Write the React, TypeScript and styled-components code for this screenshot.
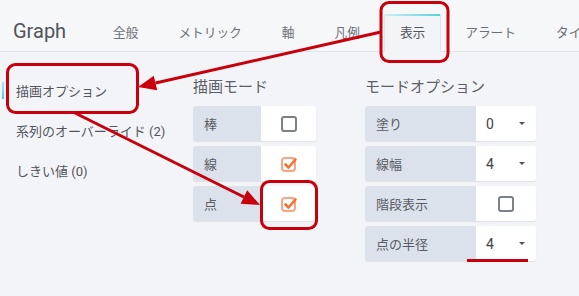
import React from "react";
import styled, { createGlobalStyle } from "styled-components";

const Global = createGlobalStyle`
  html, body { margin: 0; padding: 0; }
  body {
    background: #f3f4f7;
    font-family: Roboto, "Noto Sans CJK JP", sans-serif;
    overflow: hidden;
  }
`;

const Page = styled.div`
  position: relative;
  width: 579px;
  height: 296px;
  overflow: hidden;
  background: #f3f4f7;
`;

const Header = styled.div`
  display: flex;
  align-items: flex-end;
  height: 51px;
  padding-left: 13px;
  background: #f6f7f9;
  border-bottom: 1px solid #e2e4e9;
`;

const Title = styled.div`
  width: 84px;
  height: 38px;
  padding-bottom: 2px;
  box-sizing: border-box;
  display: flex;
  align-items: center;
  font-family: Roboto, sans-serif;
  font-size: 20px;
  color: #50535b;
  flex-shrink: 0;
`;

const Tabs = styled.div`
  display: flex;
  gap: 8px;
  flex-shrink: 0;
`;

const Tab = styled.div<{ $active?: boolean }>`
  position: relative;
  height: 38px;
  box-sizing: border-box;
  margin-bottom: -1px;
  padding: 0 15px 3px;
  display: flex;
  align-items: center;
  font-size: 12.7px;
  color: ${(p) => (p.$active ? "#52545c" : "#6c6f77")};
  white-space: nowrap;
  background: ${(p) => (p.$active ? "#f3f4f7" : "transparent")};
  border-left: 1px solid ${(p) => (p.$active ? "#e2e4e9" : "transparent")};
  border-right: 1px solid ${(p) => (p.$active ? "#e2e4e9" : "transparent")};
  ${(p) =>
    p.$active &&
    `&::before {
      content: "";
      position: absolute;
      left: 0; right: 0; top: 0;
      height: 2px;
      background: linear-gradient(90deg, #c9f1f4, #5bd0e3);
    }`}
`;

const Body = styled.div`
  display: flex;
`;

const Sidebar = styled.div`
  width: 193px;
  flex-shrink: 0;
  padding-top: 18px;
  display: flex;
  flex-direction: column;
`;

const SideItem = styled.div<{ $active?: boolean }>`
  position: relative;
  height: 40px;
  display: flex;
  align-items: center;
  padding-left: 16px;
  font-size: 13px;
  color: #52555d;
  white-space: nowrap;
  ${(p) =>
    p.$active &&
    `&::before {
      content: "";
      position: absolute;
      left: 2px; top: 12px;
      width: 2px; height: 17px;
      background: linear-gradient(180deg, #a9e9ef, #52c8e0);
    }`}
`;

const Sections = styled.div`
  display: flex;
  gap: 49px;
  padding-top: 25px;
`;

const Section = styled.div<{ $w: number }>`
  width: ${(p) => p.$w}px;
  display: flex;
  flex-direction: column;
`;

const SectionTitle = styled.div`
  height: 20px;
  line-height: 20px;
  font-size: 15px;
  color: #5c5f67;
  margin-bottom: 9px;
  white-space: nowrap;
`;

const Rows = styled.div`
  display: flex;
  flex-direction: column;
  gap: 5px;
`;

const Row = styled.div<{ $label: number }>`
  display: grid;
  grid-template-columns: ${(p) => p.$label}px 1fr;
  height: 35px;
  border-radius: 3px;
  box-shadow: 0 1px 1px rgba(40, 50, 70, 0.1);
`;

const Label = styled.div`
  display: flex;
  align-items: center;
  padding-left: 11px;
  background: #dce2eb;
  border-radius: 3px 0 0 3px;
  font-size: 13px;
  color: #585b63;
  white-space: nowrap;
`;

const Value = styled.div<{ $center?: boolean }>`
  display: flex;
  align-items: center;
  justify-content: ${(p) => (p.$center ? "center" : "space-between")};
  padding: ${(p) => (p.$center ? "0" : "0 11px 0 10px")};
  background: #ffffff;
  border-radius: 0 3px 3px 0;
  font-size: 14px;
  color: #3f4249;
`;

const Caret = styled.span`
  width: 0;
  height: 0;
  border-left: 3px solid transparent;
  border-right: 3px solid transparent;
  border-top: 3px solid #4b4e55;
`;

const Box = styled.span`
  display: block;
  width: 12px;
  height: 12px;
  border: 2px solid #7b8089;
  border-radius: 3px;
`;

const CheckSvg = styled.svg`
  display: block;
`;

const Overlay = styled.svg`
  position: absolute;
  left: 0;
  top: 0;
  pointer-events: none;
`;

function Checkbox({ checked }: { checked?: boolean }) {
  if (!checked) return <Box />;
  return (
    <CheckSvg width="18" height="18" viewBox="0 0 18 18">
      <rect x="2" y="3" width="13" height="13" rx="3" fill="none" stroke="#f9a57f" strokeWidth="2" />
      <path d="M5.5 9.5 L8.5 12.5 L15.5 4.5" fill="none" stroke="#f4712f" strokeWidth="2.6" strokeLinecap="round" strokeLinejoin="round" />
    </CheckSvg>
  );
}

const tabs = ["全般", "メトリック", "軸", "凡例", "表示", "アラート", "タイムレンジ"];

export default function App() {
  return (
    <Page>
      <Global />
      <Header>
        <Title>Graph</Title>
        <Tabs>
          {tabs.map((t) => (
            <Tab key={t} $active={t === "表示"}>
              {t}
            </Tab>
          ))}
        </Tabs>
      </Header>
      <Body>
        <Sidebar>
          <SideItem $active>描画オプション</SideItem>
          <SideItem>系列のオーバーライド (2)</SideItem>
          <SideItem>しきい値 (0)</SideItem>
        </Sidebar>
        <Sections>
          <Section $w={123}>
            <SectionTitle>描画モード</SectionTitle>
            <Rows>
              <Row $label={68}>
                <Label>棒</Label>
                <Value $center>
                  <Checkbox />
                </Value>
              </Row>
              <Row $label={68}>
                <Label>線</Label>
                <Value $center>
                  <Checkbox checked />
                </Value>
              </Row>
              <Row $label={68}>
                <Label>点</Label>
                <Value $center>
                  <Checkbox checked />
                </Value>
              </Row>
            </Rows>
          </Section>
          <Section $w={171}>
            <SectionTitle>モードオプション</SectionTitle>
            <Rows>
              <Row $label={111}>
                <Label>塗り</Label>
                <Value>
                  0<Caret />
                </Value>
              </Row>
              <Row $label={111}>
                <Label>線幅</Label>
                <Value>
                  4<Caret />
                </Value>
              </Row>
              <Row $label={111}>
                <Label>階段表示</Label>
                <Value $center>
                  <Checkbox />
                </Value>
              </Row>
              <Row $label={111}>
                <Label>点の半径</Label>
                <Value>
                  4<Caret />
                </Value>
              </Row>
            </Rows>
          </Section>
        </Sections>
      </Body>
      <Overlay width="579" height="296" viewBox="0 0 579 296">
        <g fill="none" stroke="#c9000b" strokeWidth="3">
          <rect x="381" y="2.5" width="67" height="59" rx="8" />
          <rect x="7.5" y="64.5" width="130" height="48" rx="8" />
          <rect x="261.5" y="181.5" width="55" height="47" rx="8" />
          <line x1="381" y1="32" x2="155.5" y2="83" />
          <line x1="73" y1="112" x2="243.9" y2="197" />
        </g>
        <g fill="#c9000b">
          <polygon points="138,87 157.2,90.3 153.8,75.7" />
          <polygon points="260,205 240.6,203.7 247.2,190.3" />
          <rect x="467" y="259" width="61" height="3" />
        </g>
      </Overlay>
    </Page>
  );
}
